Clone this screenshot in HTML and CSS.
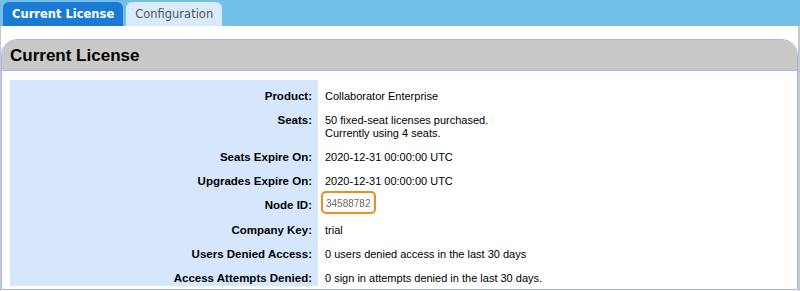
FILE: index.html
```html
<!DOCTYPE html>
<html>
<head>
  <meta charset="UTF-8" />
  <title>Current License</title>
  <link rel="stylesheet" href="styles.css">
</head>
<body>
  <div id="tabs">
    <div class="tab active">Current License</div>
    <div class="tab">Configuration</div>
  </div>
  <div id="page">
    <div class="panel">
      <div class="panel-header">Current License</div>
      <div class="panel-body">
        <table class="info">
          <tr><th>Product:</th><td>Collaborator Enterprise</td></tr>
          <tr><th>Seats:</th><td>50 fixed-seat licenses purchased.<br>Currently using 4 seats.</td></tr>
          <tr><th>Seats Expire On:</th><td>2020-12-31 00:00:00 UTC</td></tr>
          <tr><th>Upgrades Expire On:</th><td>2020-12-31 00:00:00 UTC</td></tr>
          <tr><th>Node ID:</th><td class="node"><span class="highlight"><span class="blurred">34588782</span></span></td></tr>
          <tr><th>Company Key:</th><td>trial</td></tr>
          <tr><th>Users Denied Access:</th><td>0 users denied access in the last 30 days</td></tr>
          <tr><th>Access Attempts Denied:</th><td>0 sign in attempts denied in the last 30 days.</td></tr>
        </table>
      </div>
    </div>
  </div>
</body>
</html>
```
FILE: styles.css
```css
html, body {
	margin:0px;
	padding:0px;
	height:100%;
}

body {
	font-family:"Liberation Sans",Arial,sans-serif;
	font-size:11px;
	background:#ffffff;
	overflow:hidden;
}

#tabs {
	background:#72c0e8;
	height:24px;
	padding:2px 0px 0px 3px;
	display:flex;
	gap:3px;
}

#tabs .tab {
	font-family:"DejaVu Sans",Verdana,sans-serif;
	font-size:11.5px;
	line-height:24px;
	padding:0px 9px;
	border-radius:6px 6px 0px 0px;
	background:#d8eafc;
	color:#555555;
}

#tabs .active {
	background:#1b7bd4;
	color:#ffffff;
	font-weight:bold;
}

#page {
	box-sizing:border-box;
	border-left:1px solid #c8c8c8;
	border-right:2px solid #c8c8c8;
	padding-top:13px;
	height:calc(100% - 26px);
}

.panel {
	border:1px solid #9fb4ff;
	border-radius:16px 16px 0px 0px;
	overflow:hidden;
}

.panel-header {
	background:#c9cac8;
	height:30px;
	line-height:31px;
	border-bottom:1px solid #9fb4ff;
	padding-left:8px;
	font-size:17px;
	font-weight:bold;
	color:#000000;
}

.panel-body {
	padding:9px 8px 3px 8px;
}

.info {
	border-collapse:collapse;
}

.info th {
	background:#d6e6fd;
	width:296px;
	text-align:right;
	font-weight:bold;
	font-size:11.5px;
	padding:10px 6px 1px 6px;
	line-height:13px;
	vertical-align:top;
	white-space:nowrap;
}

.info td {
	padding:10px 6px 1px 7px;
	line-height:13px;
	vertical-align:top;
	white-space:nowrap;
}

.info td.node {
	padding:2px 6px 0px 3px;
}

.highlight {
	display:inline-block;
	border:2px solid #f38b1f;
	border-radius:5px;
	padding:3px 3px 1px 3px;
	line-height:14px;
}

.blurred {
	color:#6a6a6a;
	font-size:10px;
	filter:blur(0.6px);
}
```
